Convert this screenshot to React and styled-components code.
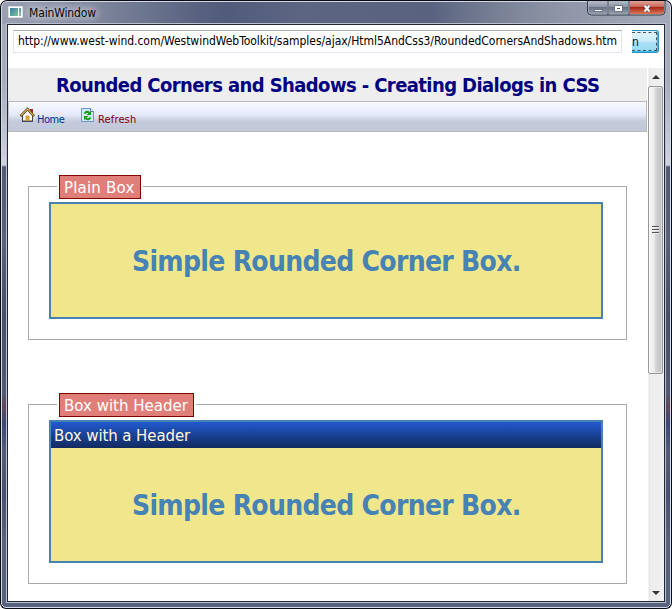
import React from "react";
import styled, { createGlobalStyle, css } from "styled-components";

const Global = createGlobalStyle`
  * { box-sizing: border-box; }
  body { margin: 0; background: #fff; }
`;

const sans = css`font-family: "DejaVu Sans Condensed", "DejaVu Sans", sans-serif; font-stretch: condensed;`;
const wideSans = css`font-family: "DejaVu Sans", sans-serif; font-stretch: normal;`;

const Outer = styled.div`
  width: 672px;
  height: 609px;
  padding: 1px;
  background: #0a0c14;
  border-radius: 7px 7px 6px 6px;
`;

const Frame = styled.div`
  width: 670px;
  height: 607px;
  border: 1px solid #d3d9e6;
  border-radius: 6px 6px 5px 5px;
  padding: 0 4px 5px;
  display: flex;
  flex-direction: column;
  background:
    linear-gradient(90deg, rgba(164,169,184,.9) 0, rgba(140,147,166,.75) 100px, rgba(110,119,146,0) 225px) 0 0 / 100% 22px no-repeat,
    linear-gradient(90deg, transparent 430px, #a4a9b7 660px) 0 0 / 100% 22px no-repeat,
    linear-gradient(90deg, #4d5878 200px, #5c6683 300px, #59637f 430px, #747c91 560px) 0 0 / 100% 22px no-repeat,
    linear-gradient(#a4a9b7 0, #a8adbb 80px, #d0d3df 163px, #535b75 165px, #59627e 240px, #47516b 310px, #515a76 390px, #64485b 404px, #3d4875 421px, #535d79 450px, #485270 492px, #59627e 540px, #56627e 100%);
`;

const TitleBar = styled.header`
  height: 21px;
  flex: none;
  display: flex;
  align-items: flex-start;
  padding-left: 1px;
`;

const AppIcon = styled.svg`
  width: 16px;
  height: 14px;
  margin: 4px 0 0 1px;
`;

const WindowName = styled.span`
  ${sans}
  font-size: 12px;
  line-height: 22px;
  margin-left: 5px;
  letter-spacing: ${(p) => p.$track}px;
  white-space: nowrap;
  color: #080808;
  text-shadow: 0 0 8px #fff, 0 0 10px #d8dbe5;
`;

const Controls = styled.svg`
  width: 79px;
  height: 15px;
  margin: -1px 0 0 auto;
`;

const Client = styled.main`
  border: 1px solid #222736;
  outline: 1px solid #b9bfce;
  background: #fff;
  flex: 1;
  min-height: 0;
  margin-top: 1px;
  margin-left: 1px;
  margin-right: 1px;
  display: flex;
  flex-direction: column;
`;

const AddressRow = styled.div`
  height: 43px;
  flex: none;
  display: flex;
  align-items: flex-start;
  padding: 5px 4px 0 5px;
`;

const Address = styled.div`
  ${sans}
  width: 609px;
  flex: none;
  height: 23px;
  border: 1px solid #e2e7ef;
  border-top-color: #abadb3;
  font-size: 12px;
  line-height: 20px;
  padding-left: 4px;
  letter-spacing: ${(p) => p.$track}px;
  white-space: nowrap;
  color: #000;
`;

const GoButton = styled.button`
  ${sans}
  margin: 0 0 0 10px;
  padding: 0;
  width: 27px;
  flex: none;
  height: 23px;
  border: 1px solid #2c8fbd;
  border-left: 0;
  border-radius: 0 3px 3px 0;
  background: linear-gradient(#e5f5fc, #c6eafa 50%, #aee0f6 51%, #95d7f2);
  box-shadow: inset -1px 0 #3bc0ef, inset 0 -1px #3bc0ef;
  font-size: 12px;
  color: #111;
`;

const FocusArea = styled.span`
  display: block;
  width: 25px;
  height: 19px;
  line-height: 19px;
  text-align: left;
  border: 1px dashed #3e5660;
  border-left: 0;
`;

const Browser = styled.div`
  display: flex;
  flex: 1;
  min-height: 0;
`;

const Page = styled.div`
  width: 639px;
  flex: none;
`;

const Heading = styled.h1`
  ${sans}
  margin: 0;
  height: 33px;
  padding-left: 48px;
  background: #eee;
  color: navy;
  font-size: 20px;
  line-height: 34px;
  letter-spacing: ${(p) => p.$track}px;
  white-space: nowrap;
`;

const Toolbar = styled.nav`
  height: 31px;
  border: 1px solid #b9b9b9;
  border-left-color: #c8c8c8;
  background: linear-gradient(#f9faff 0, #e4e9f9 45%, #c5cbdb 66%, #c1c8d9 100%);
  display: flex;
  padding: 5px 0 0 10px;
`;

const NavItem = styled.a`
  ${sans}
  display: flex;
  gap: 2px;
  width: ${(p) => p.$width}px;
  font-size: 11px;
  line-height: 26px;
  color: ${(p) => p.$color};
  letter-spacing: ${(p) => p.$track}px;
  svg { flex: none; width: 16px; height: 16px; }
`;

const Content = styled.div`
  padding: 43px 20px 0;
  display: grid;
  gap: 53px;
`;

const Group = styled.section`
  width: 599px;
  height: ${(p) => p.$height}px;
  display: flex;
  flex-direction: column;
  background: linear-gradient(#a9a9a9, #a9a9a9) 0 100% / 100% 1px no-repeat,
    linear-gradient(#a9a9a9, #a9a9a9) 0 11px / 1px 100% no-repeat,
    linear-gradient(#a9a9a9, #a9a9a9) 100% 11px / 1px 100% no-repeat,
    linear-gradient(#a9a9a9, #a9a9a9) 0 11px / 100% 1px no-repeat;
`;

const Legend = styled.div`
  ${wideSans}
  width: ${(p) => p.$width}px;
  height: 24px;
  flex: none;
  margin-left: 31px;
  padding-left: 4px;
  border: 1px solid maroon;
  box-shadow: -2px 0 #fff, 2px 0 #fff;
  background: #e07f7a;
  color: #fff;
  font-size: 15px;
  line-height: 24px;
  letter-spacing: ${(p) => p.$track}px;
  white-space: nowrap;
`;

const Box = styled.div`
  width: 554px;
  height: ${(p) => p.$height}px;
  margin: 3px 0 0 21px;
  border: 2px solid steelblue;
  background: khaki;
  display: flex;
  flex-direction: column;
`;

const BoxHeader = styled.div`
  ${wideSans}
  height: 26px;
  flex: none;
  padding-left: 3px;
  background: linear-gradient(#2259cf, #122a5e);
  color: cornsilk;
  font-size: 15px;
  line-height: 28px;
  letter-spacing: ${(p) => p.$track}px;
`;

const BoxText = styled.div`
  ${sans}
  flex: 1;
  padding-left: 81px;
  line-height: 115px;
  font-size: 28px;
  font-weight: bold;
  color: steelblue;
  letter-spacing: ${(p) => p.$track}px;
  white-space: nowrap;
`;

const Scrollbar = styled.div`
  width: 17px;
  flex: none;
  display: flex;
  flex-direction: column;
  padding-left: 1px;
  background: linear-gradient(90deg, #fff 0 1px, #e4e4e4 2px, #ededed 4px, #f0f0f0);
`;

const Arrow = styled.svg`
  width: 16px;
  height: 18px;
  flex: none;
`;

const Thumb = styled.div`
  width: 15px;
  height: 288px;
  flex: none;
  border: 1px solid #979797;
  border-radius: 2px;
  background: linear-gradient(90deg, #f6f6f6, #e9e9e9 45%, #d4d5d7 50%, #bebfc2);
  box-shadow: inset 0 0 0 1px rgba(255,255,255,.45);
  display: flex;
  align-items: center;
  justify-content: center;
  margin-bottom: auto;
`;

const Grip = styled.svg`
  width: 7px;
  height: 10px;
`;

const HomeIcon = () => (
  <svg viewBox="0 0 16 16">
    <path d="M11 2h3v5h-3z" fill="#ad2d24" />
    <path d="M3.5 8v6h10V8l-5-5z" fill="#fafafa" stroke="#444" />
    <path d="M1.5 9.2 8.5 2l6.5 7.2" fill="none" stroke="#59461c" strokeWidth="2.5" />
    <path d="M1.9 8.7 8.5 2l6.1 6.7" fill="none" stroke="#e0b45b" strokeWidth="1.1" />
    <path d="M7 9h3v5H7z" fill="#e8ad36" stroke="#b07712" strokeWidth=".6" />
    <path d="M3 14.5h11" stroke="#3e4960" />
  </svg>
);

const RefreshIcon = () => (
  <svg viewBox="0 0 16 16">
    <path d="M1.5 1.5h9l3 3v10h-12z" fill="#d3e7fb" stroke="#6996cd" />
    <path d="M10.5 1.5v3h3" fill="#fff" stroke="#4c80c0" />
    <path d="M11 4v4H6.5zM4 13V9h4.5z" fill="#109b18" />
    <path d="M4.5 6.5q2.2-3.2 4.8-.6M10.5 10.5q-2 3-4.8 1" fill="none" stroke="#109b18" strokeWidth="2" />
  </svg>
);

export default function App() {
  return (
    <>
      <Global />
      <Outer>
        <Frame>
          <TitleBar>
            <AppIcon viewBox="0 0 16 14">
              <defs>
                <linearGradient id="pane" x2="1" y2="1"><stop stopColor="#387cae" /><stop offset="1" stopColor="#77c695" /></linearGradient>
              </defs>
              <path d="M.5.5h14v11H.5z" fill="#fff" stroke="#d9dce1" />
              <path d="M2 2h8v8H2z" fill="url(#pane)" />
              <path d="M11 2h2v8h-2z" fill="#9ea9ad" /><path d="M11 2h2v4h-2z" fill="#65a1a0" />
            </AppIcon>
            <WindowName $track={-0.15}>MainWindow</WindowName>
            <Controls viewBox="0 0 79 15">
              <defs>
                <linearGradient id="glass" x2="0" y2="1"><stop stopColor="#b6bbc8" /><stop offset=".45" stopColor="#8d94a5" /><stop offset=".5" stopColor="#6b7388" /><stop offset="1" stopColor="#979fb0" /></linearGradient>
                <linearGradient id="close" x2="0" y2="1"><stop stopColor="#e2a295" /><stop offset=".45" stopColor="#ca6555" /><stop offset=".5" stopColor="#a62719" /><stop offset="1" stopColor="#dc7a55" /></linearGradient>
              </defs>
              <path d="M.5 0v10q0 4 4 4H74q4 0 4-4V0" fill="#c3c7d2" stroke="#353b4b" />
              <path d="M1.5 0v10q0 3 3 3H20V0z" fill="url(#glass)" />
              <path d="M22 0h19v13H22z" fill="url(#glass)" />
              <path d="M43 0h34v10q0 3-3 3H43z" fill="url(#close)" />
              <path d="M21 0v14M42 0v14" stroke="#353b4b" />
              <path d="M7.5 8.5h8v2h-8z" fill="#fff" stroke="#4e5668" strokeWidth=".7" />
              <path d="M27.5 4.5h8v6h-8z" fill="#fff" stroke="#4e5668" strokeWidth=".7" /><path d="M30 7h3v1h-3z" fill="#4e5668" />
              <path d="m57.5 4.5 5 6m0-6-5 6" stroke="#58414a" strokeWidth="3.2" />
              <path d="m57.5 4.5 5 6m0-6-5 6" stroke="#fff" strokeWidth="2" />
            </Controls>
          </TitleBar>
          <Client>
            <AddressRow>
              <Address $track={-0.03}>http://www.west-wind.com/WestwindWebToolkit/samples/ajax/Html5AndCss3/RoundedCornersAndShadows.htm</Address>
              <GoButton><FocusArea>n</FocusArea></GoButton>
            </AddressRow>
            <Browser>
              <Page>
                <Heading $track={-0.59}>Rounded Corners and Shadows - Creating Dialogs in CSS</Heading>
                <Toolbar>
                  <NavItem $width={61} $color="#003399" $track={-0.5}><HomeIcon />Home</NavItem>
                  <NavItem $width={70} $color="#800000" $track={0.15}><RefreshIcon />Refresh</NavItem>
                </Toolbar>
                <Content>
                  <Group $height={165}>
                    <Legend $width={82} $track={0.2}>Plain Box</Legend>
                    <Box $height={117}><BoxText $track={-0.7}>Simple Rounded Corner Box.</BoxText></Box>
                  </Group>
                  <Group $height={191}>
                    <Legend $width={135} $track={0}>Box with Header</Legend>
                    <Box $height={143}>
                      <BoxHeader $track={-0.1}>Box with a Header</BoxHeader>
                      <BoxText $track={-0.7}>Simple Rounded Corner Box.</BoxText>
                    </Box>
                  </Group>
                </Content>
              </Page>
              <Scrollbar>
                <Arrow viewBox="0 0 16 18"><path d="m4 11 4-4 4 4z" fill="#333" /></Arrow>
                <Thumb>
                  <Grip viewBox="0 0 7 10"><path d="M0 1.5h7M0 4.5h7M0 7.5h7" stroke="#555" /><path d="M0 2.5h7M0 5.5h7M0 8.5h7" stroke="#eee" /></Grip>
                </Thumb>
                <Arrow viewBox="0 0 16 18"><path d="m4 8 4 4 4-4z" fill="#333" /></Arrow>
              </Scrollbar>
            </Browser>
          </Client>
        </Frame>
      </Outer>
    </>
  );
}
